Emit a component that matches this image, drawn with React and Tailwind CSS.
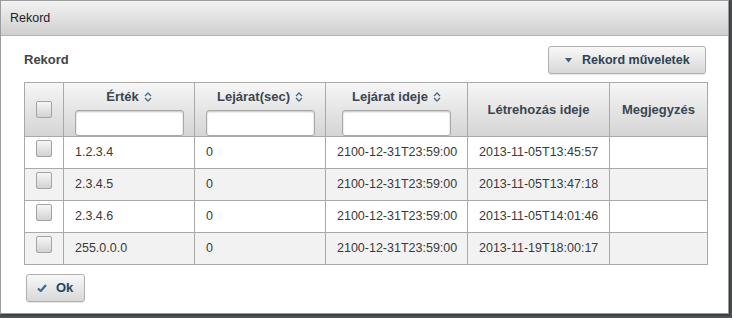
import React from 'react';

const sans = { fontFamily: '"Liberation Sans", Arial, sans-serif' };

const SortIcon = () => (
  <svg width="8" height="10" viewBox="0 0 8 10" className="inline-block ml-[5px] -mt-[2px]">
    <path d="M1 4 L4 1 L7 4" fill="none" stroke="#4d6a82" strokeWidth="1.4" />
    <path d="M1 6 L4 9 L7 6" fill="none" stroke="#4d6a82" strokeWidth="1.4" />
  </svg>
);

const CheckBox = () => (
  <div className="w-[16px] h-[17px] mx-auto rounded-[2px] border border-[#a3a3a3] bg-gradient-to-b from-[#f6f6f6] to-[#d3d3d3]" />
);

const FilterInput = () => (
  <input
    type="text"
    className="block mx-auto w-[109px] h-[26px] bg-white border border-[#a8a8a8] rounded-[3px] shadow-[inset_0_1px_2px_rgba(0,0,0,0.25)] outline-none"
  />
);

const rows = [
  { value: '1.2.3.4', ttl: '0', expires: '2100-12-31T23:59:00', created: '2013-11-05T13:45:57' },
  { value: '2.3.4.5', ttl: '0', expires: '2100-12-31T23:59:00', created: '2013-11-05T13:47:18' },
  { value: '2.3.4.6', ttl: '0', expires: '2100-12-31T23:59:00', created: '2013-11-05T14:01:46' },
  { value: '255.0.0.0', ttl: '0', expires: '2100-12-31T23:59:00', created: '2013-11-19T18:00:17' },
];

export default function App() {
  return (
    <div className="w-[732px] h-[318px] bg-[#4f5356] overflow-hidden" style={sans}>
      <div className="w-[729px] h-[314px] bg-white border border-[#9c9c9c] flex flex-col shadow-[1px_1px_2px_rgba(0,0,0,0.4)]">
        {/* Title bar */}
        <div className="h-[35px] shrink-0 flex items-center px-[9px] bg-gradient-to-b from-[#f3f3f3] to-[#cfcfcf] border-b border-[#b3b3b3] text-[12.5px] text-[#222]">
          Rekord
        </div>

        <div className="pl-[23px] pt-[10px]">
          {/* Toolbar */}
          <div className="w-[682px] flex items-center justify-between">
            <span className="text-[13px] font-bold text-[#444]">Rekord</span>
            <button className="h-[28px] w-[158px] whitespace-nowrap flex items-center gap-[10px] pl-[16px] rounded-[3px] border border-[#b0b0b0] bg-gradient-to-b from-[#f8f8f8] to-[#d8d8d8] shadow-[0_1px_1px_rgba(0,0,0,0.1)] text-[12.5px] font-bold text-[#2d4256]">
              <svg width="7" height="5" viewBox="0 0 7 5">
                <path d="M0 0 H7 L3.5 4.5 Z" fill="#3d5c79" />
              </svg>
              Rekord műveletek
            </button>
          </div>

          {/* Table */}
          <table className="mt-[8px] w-[683px] table-fixed border-collapse border border-[#a9a9a9] text-[12.5px] text-[#3a3a3a]">
            <colgroup>
              <col className="w-[39px]" />
              <col className="w-[131px]" />
              <col className="w-[131px]" />
              <col className="w-[142px]" />
              <col className="w-[142px]" />
              <col className="w-[98px]" />
            </colgroup>
            <thead>
              <tr className="h-[53px] bg-gradient-to-b from-[#f6f6f6] to-[#d4d4d4] text-[13px] font-bold text-[#3a4651]">
                <th className="border border-[#a9a9a9] align-middle">
                  <CheckBox />
                </th>
                <th className="border border-[#a9a9a9] align-top pt-[5px] font-bold">
                  <div className="h-[18px] leading-[18px]">
                    Érték
                    <SortIcon />
                  </div>
                  <div className="mt-[4px]">
                    <FilterInput />
                  </div>
                </th>
                <th className="border border-[#a9a9a9] align-top pt-[5px] font-bold">
                  <div className="h-[18px] leading-[18px]">
                    Lejárat(sec)
                    <SortIcon />
                  </div>
                  <div className="mt-[4px]">
                    <FilterInput />
                  </div>
                </th>
                <th className="border border-[#a9a9a9] align-top pt-[5px] font-bold">
                  <div className="h-[18px] leading-[18px]">
                    Lejárat ideje
                    <SortIcon />
                  </div>
                  <div className="mt-[4px]">
                    <FilterInput />
                  </div>
                </th>
                <th className="border border-[#a9a9a9] align-middle font-bold">Létrehozás ideje</th>
                <th className="border border-[#a9a9a9] align-middle font-bold">Megjegyzés</th>
              </tr>
            </thead>
            <tbody>
              {rows.map((r, i) => (
                <tr key={r.value} className={`h-[32px] ${i % 2 === 1 ? 'bg-[#f2f2f2]' : 'bg-white'}`}>
                  <td className="border border-[#a9a9a9] align-top pt-[3px]">
                    <CheckBox />
                  </td>
                  <td className="border border-[#a9a9a9] pl-[11px]">{r.value}</td>
                  <td className="border border-[#a9a9a9] pl-[11px]">{r.ttl}</td>
                  <td className="border border-[#a9a9a9] pl-[11px]">{r.expires}</td>
                  <td className="border border-[#a9a9a9] pl-[11px]">{r.created}</td>
                  <td className="border border-[#a9a9a9]"></td>
                </tr>
              ))}
            </tbody>
          </table>

          {/* Footer */}
          <button className="mt-[9px] ml-[2px] h-[28px] w-[59px] flex items-center gap-[9px] pl-[10px] rounded-[3px] border border-[#b0b0b0] bg-gradient-to-b from-[#f8f8f8] to-[#d8d8d8] shadow-[0_1px_1px_rgba(0,0,0,0.1)] text-[13px] font-bold text-[#2d4256]">
            <svg width="10" height="8" viewBox="0 0 10 8">
              <path d="M1 4.5 L3.8 7 L9 1" fill="none" stroke="#3a6a94" strokeWidth="2.2" />
            </svg>
            Ok
          </button>
        </div>
      </div>
    </div>
  );
}
